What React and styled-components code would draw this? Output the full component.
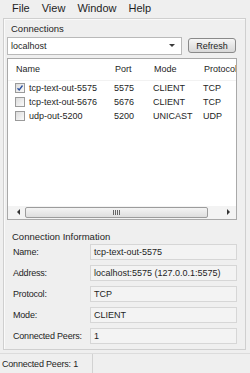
import React from 'react';
import styled, { createGlobalStyle } from 'styled-components';

const GlobalStyle = createGlobalStyle`
	body {
		margin: 0;
		background: #efefef;
		font-family: 'Liberation Sans', Arial, sans-serif;
		color: #1e1e1e;
	}
`;

const Window = styled.div`
	display: flex;
	flex-direction: column;
	width: 250px;
	height: 373px;
	background: #efefef;
	overflow: hidden;
`;

const MenuBar = styled.div`
	display: flex;
	align-items: center;
	gap: 12px;
	height: 17px;
	padding-left: 12px;
	font-size: 11px;
`;

const Panel = styled.div`
	display: flex;
	flex-direction: column;
	margin: 1px 4px 0 3px;
	padding: 0 8px 5px 3px;
	height: 332px;
	box-sizing: border-box;
	border: 1px solid #cfcfcf;
	box-shadow: inset 1px 1px 0 #fafafa;
`;

const GroupTitle = styled.div`
	height: ${(p) => p.$h}px;
	padding-top: ${(p) => p.$top}px;
	box-sizing: border-box;
	line-height: 12px;
	padding-left: ${(p) => p.$indent}px;
	font-size: 9.5px;
`;

const ComboRow = styled.div`
	display: flex;
	align-items: center;
	height: 18px;
`;

const Combo = styled.div`
	display: flex;
	align-items: center;
	width: 175px;
	height: 18px;
	box-sizing: border-box;
	padding: 0 6px 0 3px;
	background: #fff;
	border: 1px solid #b9b9b9;
	font-size: 9px;

	span {
		flex: 1;
	}
`;

const Caret = styled.i`
	width: 0;
	height: 0;
	border-left: 3px solid transparent;
	border-right: 3px solid transparent;
	border-top: 3px solid #3a3a3a;
`;

const Button = styled.button`
	margin-left: 6px;
	width: 48px;
	height: 15px;
	padding: 0;
	border: 1px solid #8a8a8a;
	border-radius: 3px;
	background: linear-gradient(#f6f6f6, #e6e6e6 50%, #d8d8d8);
	font-family: inherit;
	font-size: 9px;
	color: #1e1e1e;
`;

const List = styled.div`
	display: flex;
	flex-direction: column;
	margin-top: 3px;
	height: 162px;
	box-sizing: border-box;
	border: 1px solid #a9a9a9;
	background: #fff;
	font-size: 9px;
`;

const Grid = styled.div`
	display: grid;
	grid-template-columns: 99px 39px 50px 1fr;
	padding-left: 8px;
	overflow: hidden;
	white-space: nowrap;
`;

const Header = styled(Grid)`
	height: 21px;
	align-items: center;
	border-bottom: 1px solid #f2f2f2;
`;

const Row = styled(Grid)`
	height: 14px;
	align-items: center;
	padding-left: 7px;
`;

const NameCell = styled.div`
	display: flex;
	align-items: center;
	gap: 4px;
`;

const Check = styled.span`
	display: flex;
	align-items: center;
	justify-content: center;
	width: 10px;
	height: 10px;
	box-sizing: border-box;
	border: 1px solid #9a9a9a;
	background: linear-gradient(135deg, #dcdcdc, #fafafa);
`;

const Spacer = styled.div`
	flex: 1;
`;

const HScroll = styled.div`
	display: flex;
	align-items: center;
	height: 13px;
	padding: 0 4px 0 9px;
	background: #f3f3f3;
	gap: 5px;
`;

const Arrow = styled.i`
	width: 0;
	height: 0;
	border-top: 3px solid transparent;
	border-bottom: 3px solid transparent;
	${(p) => (p.$dir === 'left' ? 'border-right: 3px solid #333;' : 'border-left: 3px solid #333;')}
`;

const Thumb = styled.div`
	display: flex;
	align-items: center;
	justify-content: center;
	width: 183px;
	height: 11px;
	box-sizing: border-box;
	border: 1px solid #9c9c9c;
	border-radius: 2px;
	background: linear-gradient(#f4f4f4, #dedede);
	margin-right: 14px;

	svg {
		display: block;
	}
`;

const Info = styled.div`
	display: flex;
	flex-direction: column;
	gap: 5px;
`;

const Field = styled.div`
	display: flex;
	align-items: center;
	font-size: 9px;
`;

const Label = styled.div`
	width: 77px;
	padding-left: 6px;
	white-space: nowrap;
	letter-spacing: -0.2px;
`;

const Value = styled.div`
	flex: 1;
	height: 16px;
	line-height: 14px;
	box-sizing: border-box;
	padding-left: 3px;
	border: 1px solid #d6d6d6;
	background: #f3f3f3;
`;

const StatusBar = styled.div`
	display: flex;
	margin-top: 3px;
	height: 20px;
	border-top: 1px solid #dcdcdc;
	font-size: 9px;
`;

const StatusCell = styled.div`
	display: flex;
	align-items: center;
	width: 90px;
	padding-left: 2px;
	padding-top: 2px;
	border-right: 1px solid #d2d2d2;
	letter-spacing: -0.2px;
`;

const connections = [
	{ name: 'tcp-text-out-5575', port: 5575, mode: 'CLIENT', proto: 'TCP', checked: true },
	{ name: 'tcp-text-out-5676', port: 5676, mode: 'CLIENT', proto: 'TCP' },
	{ name: 'udp-out-5200', port: 5200, mode: 'UNICAST', proto: 'UDP' },
];

const details = [
	['Name:', 'tcp-text-out-5575'],
	['Address:', 'localhost:5575 (127.0.0.1:5575)'],
	['Protocol:', 'TCP'],
	['Mode:', 'CLIENT'],
	['Connected Peers:', '1'],
];

const App = () => {
	return (
		<Window>
			<GlobalStyle />
			<MenuBar>
				<span>File</span>
				<span>View</span>
				<span>Window</span>
				<span>Help</span>
			</MenuBar>
			<Panel>
				<GroupTitle $h={18} $top={4} $indent={4}>Connections</GroupTitle>
				<ComboRow>
					<Combo>
						<span>localhost</span>
						<Caret />
					</Combo>
					<Button>Refresh</Button>
				</ComboRow>
				<List>
					<Header>
						<div>Name</div>
						<div>Port</div>
						<div>Mode</div>
						<div>Protocol</div>
					</Header>
					{connections.map((c) => (
						<Row key={c.name}>
							<NameCell>
								<Check>
									{c.checked && (
										<svg width="8" height="8" viewBox="0 0 8 8">
											<path d="M1.5 4.2 L3.2 6 L6.5 1.5" fill="none" stroke="#2a4f9e" strokeWidth="1.3" />
										</svg>
									)}
								</Check>
								{c.name}
							</NameCell>
							<div>{c.port}</div>
							<div>{c.mode}</div>
							<div>{c.proto}</div>
						</Row>
					))}
					<Spacer />
					<HScroll>
						<Arrow $dir="left" />
						<Thumb>
							<svg width="7" height="5" viewBox="0 0 7 5">
								<path d="M0.5 0v5M2.5 0v5M4.5 0v5M6.5 0v5" stroke="#666" strokeWidth="1" />
							</svg>
						</Thumb>
						<Arrow $dir="right" />
					</HScroll>
				</List>
				<GroupTitle $h={24} $top={11} $indent={5}>Connection Information</GroupTitle>
				<Info>
					{details.map(([k, v]) => (
						<Field key={k}>
							<Label>{k}</Label>
							<Value>{v}</Value>
						</Field>
					))}
				</Info>
			</Panel>
			<StatusBar>
				<StatusCell>Connected Peers: 1</StatusCell>
			</StatusBar>
		</Window>
	);
};

export default App;
